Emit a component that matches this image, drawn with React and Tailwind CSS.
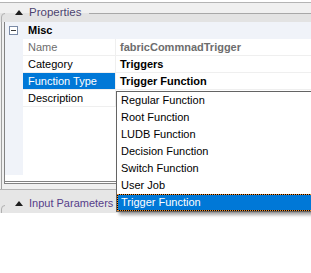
export default function App() {
  const rows = [
    { label: "Name", value: "fabricCommnadTrigger", muted: true },
    { label: "Category", value: "Triggers" },
    { label: "Function Type", value: "Trigger Function", selected: true },
    { label: "Description", value: "" },
  ];

  const options = [
    "Regular Function",
    "Root Function",
    "LUDB Function",
    "Decision Function",
    "Switch Function",
    "User Job",
    "Trigger Function",
  ];

  return (
    <div className="relative w-[311px] h-[273px] overflow-hidden bg-white font-['Liberation_Sans',Arial,sans-serif] text-[11px] leading-none text-black">
      <div className="flex flex-col bg-[#f0f0f0]">
        {/* Properties header */}
        <div className="h-[2px] bg-white" />
        <div className="flex h-[20px] items-center border-t border-[#b4b4b4] bg-[linear-gradient(#f0f0f0_0_10px,#e3e3e3_10px)]">
          <svg width="14" height="19" viewBox="0 0 14 19" className="shrink-0">
            <path d="M1.5 19 L1.5 14 Q1.5 10.5 5 10.5" fill="none" stroke="#b0b0b0" strokeWidth="1" />
          </svg>
          <svg width="8" height="5" viewBox="0 0 8 5" className="ml-[1px] shrink-0">
            <path d="M0 5 L4 0 L8 5 Z" fill="#1e1e1e" />
          </svg>
          <span className="ml-[6px] pt-px text-[11.5px] text-[#4d4470]">Properties</span>
          <div className="ml-[8px] mt-[1px] h-px flex-1 bg-[#a8a8a8]" />
        </div>

        {/* Grid */}
        <div className="ml-px border-l border-[#a0a0a0] pl-[2px]">
          <div className="border-b-[3px] border-l border-double border-[#828282] border-l-[#828282] bg-white">
            <div className="flex h-[153px]">
              <div className="w-[18px] shrink-0 bg-[#f0f3f9]" />
              <div className="flex-1">
                <div className="flex h-[17px] items-center bg-[#f0f3f9] pl-[5px]">
                  <span className="font-bold">Misc</span>
                </div>
                {rows.map((r) => (
                  <div key={r.label} className="flex h-[17px] border-b border-[#efefef]">
                    <div
                      className={`flex w-[93px] items-center border-r border-[#efefef] pl-[5px] ${
                        r.selected ? "bg-[#0078d7] text-white" : r.muted ? "text-[#6d6d6d]" : ""
                      }`}
                    >
                      {r.label}
                    </div>
                    <div className={`flex flex-1 items-center pl-[4px] font-bold ${r.muted ? "text-[#6d6d6d]" : ""}`}>
                      {r.value}
                    </div>
                  </div>
                ))}
              </div>
            </div>
            <div className="h-[6px]" />
          </div>
        </div>

        {/* splitter */}
        <div className="ml-px h-[5px] border-l border-[#a0a0a0]" />

        {/* Input Parameters header */}
        <div className="flex h-[24px] items-center border-t border-[#b4b4b4] bg-[#e6e6e6] pt-[3px]">
          <svg width="14" height="20" viewBox="0 0 14 20" className="shrink-0">
            <path d="M1.5 20 L1.5 16 Q1.5 12.5 5 12.5" fill="none" stroke="#b0b0b0" strokeWidth="1" />
          </svg>
          <svg width="8" height="5" viewBox="0 0 8 5" className="ml-[1px] shrink-0">
            <path d="M0 5 L4 0 L8 5 Z" fill="#1e1e1e" />
          </svg>
          <span className="ml-[6px] text-[11px] text-[#56408a]">Input Parameters</span>
        </div>
      </div>

      {/* Misc collapse box */}
      <div className="absolute left-[9px] top-[26px] flex h-[9px] w-[9px] items-center justify-center border border-[#7a8aa6] bg-white">
        <div className="h-px w-[5px] bg-[#3a3a3a]" />
      </div>

      {/* Dropdown list */}
      <div className="absolute left-[116px] top-[91px] w-[200px] border border-[#646464] bg-white shadow-[3px_3px_3px_rgba(0,0,0,0.35)]">
        {options.map((o) =>
          o === "Trigger Function" ? (
            <div key={o} className="h-[17px] bg-black">
              <div className="flex h-full items-center border border-dotted border-[#f28c28] bg-[#0078d7] bg-clip-padding pl-[3px] text-white">
                {o}
              </div>
            </div>
          ) : (
            <div key={o} className="flex h-[17px] items-center pl-[4px]">
              {o}
            </div>
          )
        )}
      </div>
    </div>
  );
}
